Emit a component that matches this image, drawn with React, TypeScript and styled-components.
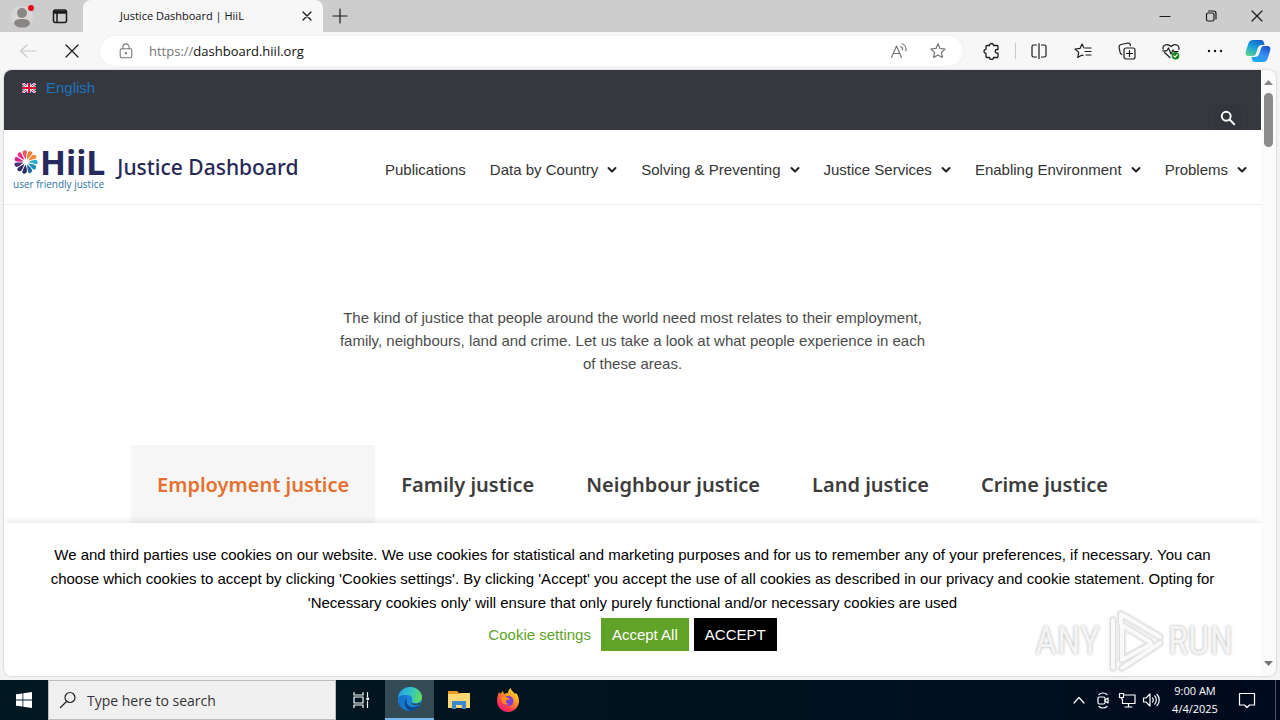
import React from "react";
import styled, { createGlobalStyle } from "styled-components";

const GlobalStyle = createGlobalStyle`
  *, *::before, *::after { box-sizing: border-box; }
  body { margin: 0; background: #f3f3f3; }
  button, input { font: inherit; }
  button { border: 0; padding: 0; background: none; color: inherit; cursor: pointer; }
  a { color: inherit; text-decoration: none; }
  svg { display: block; flex: none; }
`;

const UI_FONT = `"Open Sans", "Noto Sans", sans-serif`;
const BODY_FONT = `"Liberation Sans", Arial, sans-serif`;
const HEADING_FONT = `"Noto Sans", "Open Sans", sans-serif`;

const Desktop = styled.div`
  display: flex;
  flex-direction: column;
  height: 100vh;
  overflow: hidden;
  font-family: ${UI_FONT};
`;

/* ---------- browser chrome ---------- */

const TitleBar = styled.div`
  display: flex;
  align-items: stretch;
  height: 32px;
  flex: none;
  background: #cdcdcd;
`;

const IconButton = styled.button<{ $width?: number; $color?: string }>`
  display: flex;
  align-items: center;
  justify-content: center;
  flex: none;
  width: ${(p) => p.$width ?? 44}px;
  color: ${(p) => p.$color ?? "#1b1b1b"};
`;

const BrowserTab = styled.div`
  display: flex;
  align-items: center;
  justify-content: space-between;
  width: 240px;
  margin-left: 7px;
  padding: 0 8px 0 37px;
  border-radius: 8px 8px 0 0;
  background: #f7f7f7;
  font-size: 11px;
  line-height: 16px;
  color: #111;
`;

const Spacer = styled.div`
  flex: 1;
`;

const ToolBar = styled.div`
  display: flex;
  align-items: stretch;
  flex: none;
  height: 38px;
  padding: 0 1px 0 6px;
  background: #f7f7f7;
`;

const AddressBar = styled.div`
  display: flex;
  align-items: center;
  flex: 1;
  min-width: 0;
  margin: 4px 6px;
  padding: 0 6px 0 18px;
  border-radius: 15px;
  background: #fff;
  box-shadow: 0 0 2px #e2e2e2;
  color: #777;
`;

const Address = styled.div`
  flex: 1;
  margin-left: 15px;
  font-size: 13px;
  line-height: 20px;
  color: #767676;
`;

const Host = styled.span`
  color: #111;
`;

const Divider = styled.div`
  width: 4px;
  display: flex;
  justify-content: center;
  align-items: center;
  &::before {
    content: "";
    width: 1px;
    height: 16px;
    background: #c8c8c8;
  }
`;

const FrameHolder = styled.div`
  display: flex;
  flex: 1;
  min-height: 0;
  padding: 0 4px 4px;
  background: #f3f3f5;
`;

const Frame = styled.div`
  position: relative;
  display: flex;
  flex: 1;
  min-width: 0;
  border-radius: 8px;
  overflow: hidden;
  background: #fff;
  box-shadow: 0 0 2px #aaa;
`;

const ScrollTrack = styled.div`
  display: flex;
  flex-direction: column;
  align-items: center;
  flex: none;
  width: 15px;
  padding: 10px 0;
  background: #fbfbfb;
`;

const ScrollThumb = styled.div`
  width: 9px;
  height: 54px;
  margin-top: 8px;
  border-radius: 5px;
  background: #8b8b8b;
`;

/* ---------- web page ---------- */

const Page = styled.div`
  position: relative;
  flex: 1;
  min-width: 0;
  overflow: hidden;
  font-family: ${BODY_FONT};
  color: #333;
`;

const TopStrip = styled.div`
  display: flex;
  flex-direction: column;
  background: #35393f;
`;

const Language = styled.a`
  display: flex;
  align-items: center;
  align-self: flex-start;
  gap: 10px;
  height: 35px;
  padding-left: 18px;
  font-size: 15px;
  color: #1e73be;
`;

const SearchToggle = styled.button`
  display: flex;
  align-items: center;
  justify-content: center;
  align-self: flex-end;
  width: 26px;
  height: 25px;
  margin-right: 20px;
  background: #32353c;
  color: #fff;
`;

const Header = styled.header`
  display: flex;
  align-items: center;
  justify-content: space-between;
  height: 75px;
  padding: 0 14px 0 9px;
  border-bottom: 1px solid #ececec;
`;

const Brand = styled.a`
  display: flex;
  align-items: center;
  gap: 12px;
`;

const Logo = styled.span`
  display: flex;
  flex-direction: column;
  gap: 3px;
  margin-top: 4px;
`;

const LogoRow = styled.span`
  display: flex;
  align-items: center;
  height: 26px;
  gap: 1px;
  font-family: ${HEADING_FONT};
  font-size: 34px;
  font-weight: 700;
  line-height: 26px;
  color: #262a5e;
`;

const Tagline = styled.span`
  font-family: ${UI_FONT};
  font-size: 10px;
  font-weight: 500;
  line-height: 12px;
  color: #2e73a8;
  white-space: nowrap;
`;

const SiteName = styled.span`
  font-family: ${HEADING_FONT};
  font-size: 21px;
  font-weight: 500;
  line-height: 28px;
  color: #262858;
  white-space: nowrap;
`;

const Nav = styled.nav`
  display: flex;
  gap: 24px;
  padding-top: 5px;
`;

const NavLink = styled.a`
  display: flex;
  align-items: center;
  gap: 9px;
  font-size: 15px;
  line-height: 20px;
  color: #333;
  white-space: nowrap;
`;

const Intro = styled.p`
  max-width: 598px;
  margin: 101px auto 70px;
  font-size: 15px;
  line-height: 23px;
  text-align: center;
  color: #4c4c4c;
`;

const TabList = styled.div`
  display: flex;
  justify-content: center;
`;

const Tab = styled.button<{ $active?: boolean }>`
  height: 79px;
  padding: 0 26px;
  font-family: ${HEADING_FONT};
  font-size: 20px;
  font-weight: 600;
  white-space: nowrap;
  color: ${(p) => (p.$active ? "#e5702f" : "#3c3c3c")};
  background: ${(p) => (p.$active ? "#f6f6f6" : "transparent")};
`;

const CookieBanner = styled.section`
  position: absolute;
  left: 0;
  right: 0;
  bottom: 0;
  padding: 20px 40px 25px;
  background: #fff;
  box-shadow: 0 0 8px rgba(0, 0, 0, 0.15);
  text-align: center;
  font-size: 15px;
  color: #000;
`;

const CookieText = styled.p`
  margin: 0 0 3px;
  line-height: 24px;
`;

const CookieActions = styled.div`
  display: flex;
  align-items: center;
  justify-content: center;
  gap: 5px;
`;

const CookieLink = styled.a`
  margin-right: 5px;
  color: #61a229;
`;

const CookieButton = styled.button<{ $bg: string }>`
  height: 33px;
  padding: 0 11px;
  background: ${(p) => p.$bg};
  color: #fff;
`;

const Watermark = styled.div`
  position: absolute;
  right: 43px;
  bottom: 2px;
  display: flex;
  align-items: center;
  gap: 4px;
  font-family: "Liberation Sans Narrow", "Roboto Condensed", "Liberation Sans", sans-serif;
  font-size: 38px;
  line-height: 66px;
  color: #f4f4f4;
  text-shadow: 0 0 3px #aaa;
  pointer-events: none;
`;

/* ---------- task bar ---------- */

const TaskBar = styled.div`
  display: flex;
  flex: none;
  height: 40px;
  background: linear-gradient(90deg, #001822, #00131f 60%, #000a1e);
  color: #fff;
`;

const TaskSearch = styled.label`
  display: flex;
  align-items: center;
  gap: 10px;
  width: 288px;
  padding: 0 10px;
  border: 1px solid #bcbcbc;
  background: #f0f0f0;
  color: #222;
`;

const TaskInput = styled.input`
  flex: 1;
  min-width: 0;
  padding: 0;
  border: 0;
  outline: 0;
  background: transparent;
  font-size: 14px;
  color: #333;
  &::placeholder { color: #333; opacity: 1; }
`;

const TaskButton = styled.button<{ $active?: boolean }>`
  display: flex;
  align-items: center;
  justify-content: center;
  width: 49px;
  background: ${(p) => (p.$active ? "#344a54" : "transparent")};
  border-bottom: ${(p) => (p.$active ? "2px solid #76b9ed" : "0")};
`;

const Clock = styled.div`
  display: flex;
  flex-direction: column;
  justify-content: center;
  width: 64px;
  font-size: 11px;
  line-height: 18px;
  text-align: center;
  white-space: nowrap;
`;

const ShowDesktop = styled.button`
  width: 5px;
  margin-left: 8px;
  border-left: 1px solid #4a5060;
`;

/* ---------- icons ---------- */

type IconProps = { size?: number; width?: number; children: React.ReactNode };

const Line = ({ size = 18, width = 1.2, children }: IconProps) => (
  <svg width={size} height={size} viewBox="0 0 18 18" fill="none" stroke="currentColor" strokeWidth={width} strokeLinejoin="round" strokeLinecap="round" aria-hidden="true">
    {children}
  </svg>
);

const STAR = "M9 1.8l2.1 4.6 5 .6-3.7 3.4 1 5L9 12.9l-4.4 2.5 1-5L1.900 7l5-.6z";

const Profile = () => (
  <svg width="26" height="28" viewBox="0 0 26 28" aria-hidden="true">
    <circle cx="13" cy="15" r="11" fill="#d8d6d5" />
    <circle cx="13" cy="11" r="5" fill="#8a8683" />
    <path d="M5 22c0-4 3-5 8-5s8 1 8 5c-2 3-5 3.500-8 3.500s-6-.5-8-3.500z" fill="#8a8683" />
    <circle cx="22" cy="6" r="3" fill="#e30b17" />
  </svg>
);

const Copilot = () => (
  <svg width="26" height="24" viewBox="0 0 26 24" aria-hidden="true">
    <defs>
      <linearGradient id="cpA" x1="0.700" y1="0" x2="0.200" y2="1">
        <stop offset="0" stopColor="#1462c9" />
        <stop offset="0.500" stopColor="#1aa2dc" />
        <stop offset="1" stopColor="#5bd28c" />
      </linearGradient>
      <linearGradient id="cpB" x1="0.800" y1="0" x2="0.200" y2="1">
        <stop offset="0" stopColor="#1a52ce" />
        <stop offset="0.500" stopColor="#3c8df5" />
        <stop offset="1" stopColor="#12aef0" />
      </linearGradient>
    </defs>
    <path d="M8 1h8c2 0 2.500 1 3 3l.6 2h-3c-2 0-3 1-3.600 3l-1.600 5c-.6 2-1.500 3-4 3H4c-3 0-4-2-3-5l2.500-8C4.300 2 6 1 8 1z" fill="url(#cpA)" />
    <path d="M18 23h-8c-2 0-2.500-1-3-3l-.6-2h3c2 0 3-1 3.600-3l1.600-5c.6-2 1.500-3 4-3H22c3 0 4 2 3 5l-2.500 8c-.8 2-2.500 3-4.500 3z" fill="url(#cpB)" />
    <path d="M15 7c-1 .6-1.900 1.400-2.400 3l-1.600 4.900c-.4 1.200-.9 1.800-1.800 2.400l2.800.2c1.200-.6 1.800-1.400 2.300-2.900l1.500-4.600c.4-1.200 1-1.900 1.900-2.500z" fill="#f2fbff" />
  </svg>
);

const Flag = () => (
  <svg width="14" height="10" viewBox="0 0 14 10" aria-hidden="true">
    <path fill="#23357e" d="M0 0h14v10H0z" />
    <path d="M0 0l14 10M14 0L0 10" stroke="#fff" strokeWidth="2.600" />
    <path d="M0 0l14 10M14 0L0 10" stroke="#e0284c" strokeWidth="1" />
    <path d="M7 0v10M0 5h14" stroke="#fff" strokeWidth="3.200" />
    <path d="M7 0v10M0 5h14" stroke="#e0102c" strokeWidth="2" />
  </svg>
);

const Chevron = () => (
  <svg width="10" height="8" viewBox="0 0 10 8" fill="none" stroke="#222" strokeWidth="2" strokeLinecap="round" strokeLinejoin="round" aria-hidden="true">
    <path d="M1.500 2L5 5.500 8.500 2" />
  </svg>
);

const PETALS = ["#ec5a62", "#f0823c", "#f08a34", "#2bb0d4", "#1b8fc0", "#1c6ca3", "#262a5e", "#33306c", "#4c2e7c", "#d9258d", "#ec2f86"];

const Burst = () => (
  <svg width="26" height="26" viewBox="-13 -13 26 26" aria-hidden="true">
    {PETALS.map((fill, i) => (
      <path key={fill} d="M0-2.500C-1.600-5.500-3-8.500-2.400-10.500C-.5-12.500 1.600-12 1.900-10.500C1.700-8 .8-5.500 0-2.500z" fill={fill} transform={`rotate(${i * 32.7 - 6})`} />
    ))}
  </svg>
);

const PLAY_BARS = "M17 6L56 29M18 17L46 34M56 35L18 60M47 36L18 52V17M17 6v10M9 12v48";

const PlayMark = () => (
  <svg width="60" height="66" viewBox="0 0 60 66" fill="none" strokeLinejoin="round" strokeLinecap="round" aria-hidden="true">
    <path d={PLAY_BARS} stroke="#ededed" strokeWidth="9" />
    <path d={PLAY_BARS} stroke="#dedede" strokeWidth="6" />
    <path d={PLAY_BARS} stroke="#f9f9f9" strokeWidth="4" />
  </svg>
);

const Windows = () => (
  <svg width="16" height="16" viewBox="0 0 16 16" fill="#fff" aria-hidden="true">
    <path d="M0 2.300l6.500-.9v6.200H0zM7.300 1.300L16 0v7.600H7.300zM0 8.400h6.500v6.200L0 13.700zM7.300 8.400H16V16l-8.700-1.300z" />
  </svg>
);

const Edge = () => (
  <svg width="24" height="24" viewBox="0 0 24 24" aria-hidden="true">
    <defs>
      <linearGradient id="edA" x1="0" y1="0.300" x2="1" y2="0.500">
        <stop offset="0" stopColor="#259fe0" />
        <stop offset="0.500" stopColor="#2fc3c8" />
        <stop offset="1" stopColor="#62dc5b" />
      </linearGradient>
    </defs>
    <circle cx="12" cy="12" r="12" fill="#1786d8" />
    <path d="M0 11C1 4 6 0 12 0c7 0 12 5 12 10 0 4-3 6-6.500 6-3 0-4-1-3.500-2 1-1.500.6-6-5-6C4.500 8 1 9 0 11z" fill="url(#edA)" />
    <path d="M9 9c-4 5-2 12 5 14.800C5 25 0 18 0 12c0-3 5-5 9-3z" fill="#1575cb" />
    <path d="M9.500 10C7 14 9 20 15 20c3 0 6-1 7.500-3-2 5-6 7-9.500 6.900C6 22 5 14 9.500 10z" fill="#11488c" />
    <path d="M13.500 15.500c1 1.500 6 2 9.500-.5l-.5 2c-3 2-9 2-9-1.500z" fill="#344a54" />
  </svg>
);

const Folder = () => (
  <svg width="22" height="20" viewBox="0 0 22 20" aria-hidden="true">
    <path d="M0 1h9l2 2h11v4H0z" fill="#e79b20" />
    <path d="M0 4h12l1-1h9v15H0z" fill="#fcd772" />
    <path d="M4 11h14v8h-4v-4H8v4H4z" fill="#3b8ad0" />
  </svg>
);

const Firefox = () => (
  <svg width="24" height="24" viewBox="0 0 24 24" aria-hidden="true">
    <defs>
      <linearGradient id="ffA" x1="0.900" y1="0" x2="0.200" y2="1">
        <stop offset="0" stopColor="#fff04a" />
        <stop offset="0.400" stopColor="#ff9a1f" />
        <stop offset="0.750" stopColor="#ff3a4c" />
        <stop offset="1" stopColor="#e5187e" />
      </linearGradient>
    </defs>
    <path d="M3 4l1 2 3-3 1 3c2-1 3-1 4-1 0-2 1-4 3-5 0 3 2 3 4 6l1-1c2 2 3 5 3 8 0 6-5 11-11 11S1 19 1 13c0-4 1-6 2-9z" fill="url(#ffA)" />
    <circle cx="12.500" cy="13" r="5" fill="#7a3fd6" />
    <path d="M5 9c3-1 5 0 7 1 2 0 2 2-1 2-2 1-1 4 2 4-3 2-8 0-8-7z" fill="#ff8a1f" />
  </svg>
);

/* ---------- data ---------- */

const NAV = [
  { label: "Publications", menu: false },
  { label: "Data by Country", menu: true },
  { label: "Solving & Preventing", menu: true },
  { label: "Justice Services", menu: true },
  { label: "Enabling Environment", menu: true },
  { label: "Problems", menu: true },
];

const TABS = ["Employment justice", "Family justice", "Neighbour justice", "Land justice", "Crime justice"];

const Chrome = () => (
  <>
    <TitleBar>
      <IconButton aria-label="Profile"><Profile /></IconButton>
      <IconButton $width={32} aria-label="Tab actions">
        <Line size={18} width={1.5}><rect x="2.500" y="3" width="13" height="12.500" rx="2" /><path d="M3 4.500h12M3 6h12M6 6v9" /></Line>
      </IconButton>
      <BrowserTab>
        <span>Justice Dashboard | HiiL</span>
        <IconButton $width={16} aria-label="Close tab">
          <Line size={16} width={1.500}><path d="M4.500 4.500l9 9M13.500 4.500l-9 9" /></Line>
        </IconButton>
      </BrowserTab>
      <IconButton $width={34} aria-label="New tab"><Line size={18}><path d="M9 2v14M2 9h14" /></Line></IconButton>
      <Spacer />
      <IconButton $width={46} aria-label="Minimize"><Line><path d="M4 9.500h10" /></Line></IconButton>
      <IconButton $width={46} aria-label="Restore">
        <Line><rect x="4.500" y="6" width="7.500" height="8" rx="1.500" /><path d="M6.500 4h5c1.500 0 2.500 1 2.500 2.500V12" /></Line>
      </IconButton>
      <IconButton $width={46} aria-label="Close window"><Line><path d="M4 4l10 10M14 4L4 14" /></Line></IconButton>
    </TitleBar>
    <ToolBar>
      <IconButton $color="#c9c9c9" aria-label="Back"><Line><path d="M17 9H1.500M8 3L1.500 9 8 15" /></Line></IconButton>
      <IconButton aria-label="Stop"><Line><path d="M3 3l12 12M15 3L3 15" /></Line></IconButton>
      <AddressBar>
        <Line size={16}><rect x="2.500" y="6.500" width="13" height="10" rx="1.500" /><path d="M5.500 6.500V4.500a3.500 3.500 0 017 0v2" /><circle cx="9" cy="11.500" r="0.700" fill="currentColor" /></Line>
        <Address>https://<Host>dashboard.hiil.org</Host></Address>
        <IconButton $width={40} $color="#777" aria-label="Read aloud">
          <Line><path d="M1.500 15.500L6.500 4l5 11.500M3.200 11.500h6.600M10.500 4.500c1.500.5 2.300 2 2 3.500M12 1.800c3 1 4.500 4 3.800 7" /></Line>
        </IconButton>
        <IconButton $width={38} $color="#777" aria-label="Add to favorites"><Line><path d={STAR} /></Line></IconButton>
      </AddressBar>
      <IconButton aria-label="Extensions">
        <Line width={1.300}><path d="M5 3.500h2.500a2 2 0 014 0H15a1 1 0 011 1v3h-1a1.800 1.800 0 000 3.600h1v3.400a1 1 0 01-1 1h-3.500a2 2 0 01-4 0H5a1 1 0 01-1-1v-3.200a2 2 0 010-4V4.500a1 1 0 011-1z" /></Line>
      </IconButton>
      <Divider />
      <IconButton aria-label="Split screen"><Line><path d="M9 1.500v15M6.500 3H3.500C2.500 3 2 3.500 2 4.500v9c0 1 .5 1.500 1.500 1.500h3M11.500 3h3c1 0 1.500.5 1.500 1.500v9c0 1-.5 1.500-1.500 1.500h-3" /></Line></IconButton>
      <IconButton aria-label="Favorites"><Line><path d="M10 6L8 2 6 6.400l-5 .6 3.700 3.400-1 5L8 13l1 .6M11.500 6H17M11 9.500h6M12 13h5" /></Line></IconButton>
      <IconButton aria-label="Collections"><Line><rect x="6" y="6" width="11" height="11" rx="2" /><path d="M11.500 8.500v6M8.500 11.500h6M4 12.500C2.500 12 2 11 2 10L1 5c0-1.500.8-2.200 2-2.500L10 1c1.500 0 2.300.8 2.500 2.500" /></Line></IconButton>
      <IconButton aria-label="Browser essentials">
        <Line><path d="M1.200 7C0 3.500 5 .5 9 4.500c4-4 9-1 7.800 3M2.500 10.500L8 15.500M.8 8.800h4L6.500 6l2.500 6 2-4 1 1.500h4" /><circle cx="13.500" cy="13.800" r="3.800" fill="#13821a" stroke="none" /><path d="M11.800 14l1.200 1.200 2.300-2.500" stroke="#fff" /></Line>
      </IconButton>
      <IconButton aria-label="Settings and more"><Line width={2.400}><path d="M3 9h0M9 9h0M15 9h0" /></Line></IconButton>
      <IconButton $width={42} aria-label="Copilot"><Copilot /></IconButton>
    </ToolBar>
  </>
);

const Site = () => (
  <Page>
    <TopStrip>
      <Language href="#english"><Flag />English</Language>
      <SearchToggle aria-label="Search">
        <Line size={16} width={2.200}><circle cx="7" cy="7" r="5" /><path d="M11 11l5 5" /></Line>
      </SearchToggle>
    </TopStrip>
    <Header>
      <Brand href="#home">
        <Logo>
          <LogoRow><Burst />HiiL</LogoRow>
          <Tagline>user friendly justice</Tagline>
        </Logo>
        <SiteName>Justice Dashboard</SiteName>
      </Brand>
      <Nav>
        {NAV.map((item) => (
          <NavLink key={item.label} href="#menu">{item.label}{item.menu && <Chevron />}</NavLink>
        ))}
      </Nav>
    </Header>
    <Intro>
      The kind of justice that people around the world need most relates to their employment, family, neighbours, land and crime. Let us take a look at what people experience in each of these areas.
    </Intro>
    <TabList role="tablist">
      {TABS.map((label, i) => (
        <Tab key={label} role="tab" aria-selected={i === 0} $active={i === 0}>{label}</Tab>
      ))}
    </TabList>
    <CookieBanner aria-label="Cookies">
      <CookieText>
        We and third parties use cookies on our website. We use cookies for statistical and marketing purposes and for us to remember any of your preferences, if necessary. You can choose which cookies to accept by clicking 'Cookies settings'. By clicking 'Accept' you accept the use of all cookies as described in our privacy and cookie statement. Opting for 'Necessary cookies only' will ensure that only purely functional and/or necessary cookies are used
      </CookieText>
      <CookieActions>
        <CookieLink href="#settings">Cookie settings</CookieLink>
        <CookieButton $bg="#61a229">Accept All</CookieButton>
        <CookieButton $bg="#000">ACCEPT</CookieButton>
      </CookieActions>
    </CookieBanner>
  </Page>
);

const Tasks = () => (
  <TaskBar>
    <IconButton $width={48} aria-label="Start"><Windows /></IconButton>
    <TaskSearch>
      <Line size={18}><circle cx="11" cy="6.500" r="5" /><path d="M7.500 10.500L1.500 16.500" /></Line>
      <TaskInput aria-label="Type here to search" placeholder="Type here to search" />
    </TaskSearch>
    <TaskButton aria-label="Task view">
      <Line><path d="M2 1.500V4h9V1.500M2 16.500V14h9v2.500M2 6h9v6H2zM15.500 1.500v4M15.500 10v6.500" /><path d="M15 7h1.500v1.500H15z" fill="currentColor" /></Line>
    </TaskButton>
    <TaskButton $active aria-label="Edge"><Edge /></TaskButton>
    <TaskButton aria-label="File Explorer"><Folder /></TaskButton>
    <TaskButton aria-label="Firefox"><Firefox /></TaskButton>
    <Spacer />
    <IconButton $width={24} $color="#fff" aria-label="Hidden icons"><Line><path d="M4 12l5-5.500 5 5.500" /></Line></IconButton>
    <IconButton $width={24} $color="#fff" aria-label="Meet now">
      <Line><rect x="4" y="6" width="7" height="7" rx="1.500" /><path d="M11 9l3-2v5l-3-2M5 3.500c2-2 6-2 8 0M5 15.500c2 2 6 2 8 0" /></Line>
    </IconButton>
    <IconButton $width={24} $color="#fff" aria-label="Network">
      <Line><path d="M6 4h11v8.500H4.500V8M10.500 12.500V16M7 16h7M1.500 2.500h4v4h-4zM3.500 6.500V8" /></Line>
    </IconButton>
    <IconButton $width={24} $color="#fff" aria-label="Volume">
      <Line><path d="M1.500 7h2.500l4-4v12l-4-4H1.500zM10.500 7c1 1 1 3 0 4M12.800 5c2 2 2 6 0 8M15 3.500c3 3 3 8 0 11" /></Line>
    </IconButton>
    <Clock><span>9:00 AM</span><span>4/4/2025</span></Clock>
    <IconButton $width={40} $color="#fff" aria-label="Notifications">
      <Line><path d="M1.500 2.500h15v11.500h-5L9 16.500 6.500 14h-5z" /></Line>
    </IconButton>
    <ShowDesktop aria-label="Show desktop" />
  </TaskBar>
);

export default function App() {
  return (
    <Desktop>
      <GlobalStyle />
      <Chrome />
      <FrameHolder>
        <Frame>
          <Site />
          <ScrollTrack>
            <svg width="9" height="5" viewBox="0 0 9 5" fill="#858585" aria-hidden="true"><path d="M0 5l4.500-5L9 5z" /></svg>
            <ScrollThumb />
            <Spacer />
            <svg width="9" height="5" viewBox="0 0 9 5" fill="#757575" aria-hidden="true"><path d="M0 0l4.500 5L9 0z" /></svg>
          </ScrollTrack>
          <Watermark aria-hidden="true"><span>ANY</span><PlayMark /><span>RUN</span></Watermark>
        </Frame>
      </FrameHolder>
      <Tasks />
    </Desktop>
  );
}
